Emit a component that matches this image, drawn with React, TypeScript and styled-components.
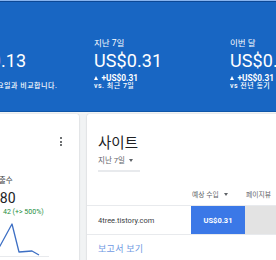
import React from "react";
import styled, { createGlobalStyle } from "styled-components";

const GlobalStyle = createGlobalStyle`
  html, body {
    margin: 0;
    padding: 0;
    background: #f1f3f4;
    overflow: hidden;
  }
  body {
    font-family: Roboto, "Noto Sans CJK KR", sans-serif;
  }
`;

const Page = styled.div`
  width: 276px;
  height: 260px;
  overflow: hidden;
  background: #f1f3f4;
`;

const Header = styled.header`
  height: 110px;
  background: #1866c3;
  border-top: 1px solid #86b3ee;
  border-bottom: 1px solid #0f55a8;
  box-shadow: inset 0 1px 0 #0c4896;
  overflow: hidden;
`;

const StatRow = styled.div`
  display: flex;
  margin-left: -42px;
  padding-top: 36px;
`;

const Stat = styled.div`
  flex: 0 0 136px;
  color: #ffffff;
`;

const StatLabel = styled.div`
  font-size: 8.5px;
  line-height: 12px;
  height: 12px;
`;

const StatValue = styled.div`
  font-size: 18px;
  line-height: 24px;
  letter-spacing: 0.1px;
`;

const StatDelta = styled.div`
  display: flex;
  align-items: center;
  gap: 3.5px;
  font-size: 8.3px;
  line-height: 8px;
  font-weight: 700;
  margin-top: 1px;
  height: 8px;
`;

const UpMark = styled.span`
  width: 0;
  height: 0;
  border-left: 2.5px solid transparent;
  border-right: 2.5px solid transparent;
  border-bottom: 4px solid #ffffff;
`;

const StatNote = styled.div`
  font-size: 7px;
  line-height: 9px;
  font-weight: 500;
  letter-spacing: 0.5px;
  white-space: nowrap;
`;

const Main = styled.main`
  display: flex;
  gap: 8px;
  padding-top: 2px;
  margin-left: -21px;
`;

const Card = styled.section<{ $width: number }>`
  flex: 0 0 ${(p) => p.$width}px;
  height: 160px;
  background: #ffffff;
  border-radius: 2px;
  box-shadow: 0 0 1px rgba(60, 64, 67, 0.3), 0 1px 2px rgba(60, 64, 67, 0.15);
`;

const MiniCard = styled(Card)`
  padding: 22px 16px 0 13px;
  box-sizing: border-box;
`;

const CardTools = styled.div`
  display: flex;
  justify-content: flex-end;
  height: 30px;
`;

const Kebab = styled.span`
  display: flex;
  flex-direction: column;
  gap: 1.5px;
  padding: 1px 1px;
  span {
    width: 2px;
    height: 2px;
    border-radius: 50%;
    background: #3c4043;
  }
`;

const MetricLabel = styled.div`
  margin-top: 10px;
  font-size: 7.5px;
  line-height: 10px;
  color: #3c4043;
  white-space: nowrap;
`;

const MetricValue = styled.div`
  margin-top: 3px;
  font-size: 14px;
  line-height: 18px;
  color: #202124;
`;

const MetricChange = styled.div`
  display: flex;
  align-items: center;
  gap: 4px;
  font-size: 7px;
  line-height: 10px;
  color: #1e8e3e;
  white-space: nowrap;
`;

const ChartBox = styled.div`
  margin: 4px 0 0 -13px;
  height: 37px;
`;

const SiteCard = styled(Card)`
  padding-top: 21px;
  box-sizing: border-box;
`;

const SiteTitle = styled.h2`
  margin: 0 0 0 11px;
  font-size: 14.5px;
  font-weight: 400;
  line-height: 18px;
  color: #202124;
`;

const RangePicker = styled.div`
  margin: 2px 0 0 11px;
  width: 42px;
  padding-bottom: 4px;
  border-bottom: 2px solid #e8eaed;
  display: flex;
  align-items: center;
  gap: 4px;
  font-size: 7.5px;
  line-height: 11px;
  color: #5f6368;
`;

const Caret = styled.span`
  width: 0;
  height: 0;
  border-left: 2.5px solid transparent;
  border-right: 2.5px solid transparent;
  border-top: 3px solid #5f6368;
`;

const TableHead = styled.div`
  display: grid;
  grid-template-columns: 104px 54px 80px;
  margin-top: 16px;
  height: 17px;
  font-size: 6.8px;
  color: #5f6368;
  border-bottom: 1px solid #e8eaed;
`;

const HeadCell = styled.div`
  display: flex;
  align-items: center;
  height: 12px;
  gap: 5px;
  padding-left: 1px;
  white-space: nowrap;
  overflow: hidden;
`;

const TableRow = styled.div`
  display: grid;
  grid-template-columns: 104px 54px 80px;
  height: 28px;
  border-bottom: 1px solid #e8eaed;
`;

const SiteName = styled.div`
  display: flex;
  align-items: center;
  padding-left: 11px;
  font-size: 7.5px;
  color: #3c4043;
`;

const BarCell = styled.div<{ $fill: string }>`
  display: flex;
  align-items: center;
  justify-content: center;
  background: ${(p) => p.$fill};
  color: #ffffff;
  font-size: 7.5px;
  font-weight: 700;
`;

const ReportLink = styled.a`
  display: block;
  margin: 8px 0 0 11px;
  font-size: 9px;
  letter-spacing: 0.3px;
  line-height: 12px;
  color: #6f9ae3;
  text-decoration: none;
`;

const stats = [
  { label: "어제", value: "US$0.13", delta: "", note: "지난주 같은 요일과 비교합니다." },
  { label: "지난 7일", value: "US$0.31", delta: "+US$0.31", note: "vs. 최근 7일" },
  { label: "이번 달", value: "US$0.31", delta: "+US$0.31", note: "vs 전년 동기" },
];

// chart points in svg coordinates (svg spans the card's left edge)
const trend = [
  [0, 32],
  [15, 31],
  [21, 25],
  [33, 3],
  [40, 31],
  [53, 30],
  [60, 34],
];

const App: React.FC = () => {
  const points = trend.map(([x, y]) => `${x},${y}`).join(" ");

  return (
    <Page>
      <GlobalStyle />
      <Header>
        <StatRow>
          {stats.map((s) => (
            <Stat key={s.label}>
              <StatLabel>{s.label}</StatLabel>
              <StatValue>{s.value}</StatValue>
              <StatDelta>
                {s.delta && (
                  <>
                    <UpMark />
                    {s.delta}
                  </>
                )}
              </StatDelta>
              <StatNote>{s.note}</StatNote>
            </Stat>
          ))}
        </StatRow>
      </Header>
      <Main>
        <MiniCard $width={100}>
          <CardTools>
            <Kebab>
              <span />
              <span />
              <span />
            </Kebab>
          </CardTools>
          <MetricLabel>노출수</MetricLabel>
          <MetricValue>180</MetricValue>
          <MetricChange>
            <span>↑</span>42 (+&gt; 500%)
          </MetricChange>
          <ChartBox>
            <svg width="70" height="37" viewBox="0 0 70 37">
              <line x1="0" y1="35.5" x2="70" y2="35.5" stroke="#e8eaed" strokeWidth="1" />
              <polyline points={points} fill="none" stroke="#3d6fc4" strokeWidth="1.3" strokeLinejoin="round" />
            </svg>
          </ChartBox>
        </MiniCard>
        <SiteCard $width={300}>
          <SiteTitle>사이트</SiteTitle>
          <RangePicker>
            지난 7일 <Caret />
          </RangePicker>
          <TableHead>
            <HeadCell />
            <HeadCell>
              예상 수입 <Caret />
            </HeadCell>
            <HeadCell>페이지뷰</HeadCell>
          </TableHead>
          <TableRow>
            <SiteName>4tree.tistory.com</SiteName>
            <BarCell $fill="#3b78e7">US$0.31</BarCell>
            <BarCell $fill="#e3e3e3" />
          </TableRow>
          <ReportLink href="#">보고서 보기</ReportLink>
        </SiteCard>
      </Main>
    </Page>
  );
};

export default App;
